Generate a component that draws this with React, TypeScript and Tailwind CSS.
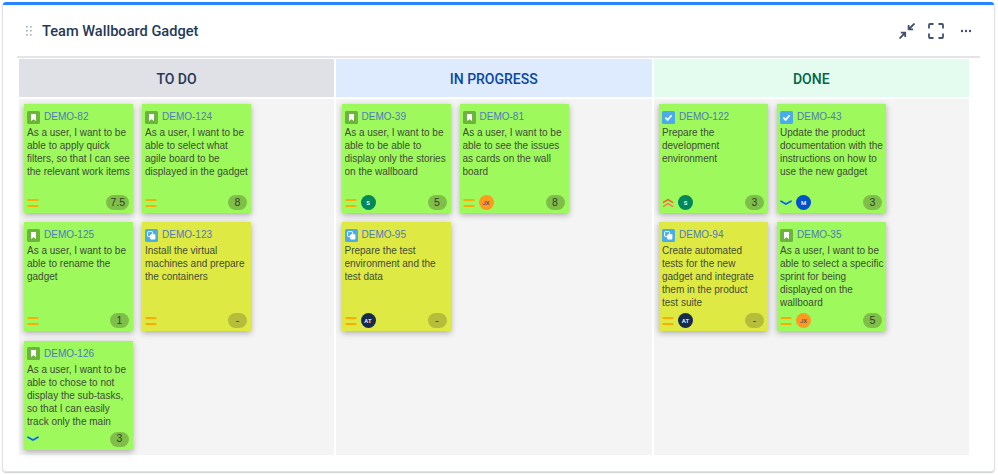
import React from "react";

type Kind = "story" | "task" | "sub";
type Pri = "med" | "low" | "high";
type Av = { t: string; c: string; fg?: string } | null;
type CardT = { id: string; kind: Kind; text: string; pri: Pri; av?: Av; pts: string; yellow?: boolean };

const S: Av = { t: "S", c: "bg-[#00875a]" };
const JX: Av = { t: "JX", c: "bg-[#ff991f]", fg: "text-[#42526e]" };
const AT: Av = { t: "AT", c: "bg-[#172b4d]" };
const M: Av = { t: "M", c: "bg-[#0052cc]" };

const cols: { name: string; head: string; fg: string; pad: string; w: string; cards: CardT[] }[] = [
  {
    name: "TO DO",
    head: "bg-[#dfe1e6]",
    fg: "text-[#253858]",
    pad: "pl-[5px]",
    w: "w-[315px]",
    cards: [
      { id: "DEMO-82", kind: "story", text: "As a user, I want to be able to apply quick filters, so that I can see the relevant work items", pri: "med", pts: "7.5" },
      { id: "DEMO-124", kind: "story", text: "As a user, I want to be able to select what agile board to be displayed in the gadget", pri: "med", pts: "8" },
      { id: "DEMO-125", kind: "story", text: "As a user, I want to be able to rename the gadget", pri: "med", pts: "1" },
      { id: "DEMO-123", kind: "sub", text: "Install the virtual machines and prepare the containers", pri: "med", pts: "-", yellow: true },
      { id: "DEMO-126", kind: "story", text: "As a user, I want to be able to chose to not display the sub-tasks, so that I can easily track only the main", pri: "low", pts: "3" },
    ],
  },
  {
    name: "IN PROGRESS",
    head: "bg-[#deebff]",
    fg: "text-[#0747a6]",
    pad: "pl-[5.5px]",
    w: "w-[315.5px]",
    cards: [
      { id: "DEMO-39", kind: "story", text: "As a user, I want to be able to be able to display only the stories on the wallboard", pri: "med", av: S, pts: "5" },
      { id: "DEMO-81", kind: "story", text: "As a user, I want to be able to see the issues as cards on the wall board", pri: "med", av: JX, pts: "8" },
      { id: "DEMO-95", kind: "sub", text: "Prepare the test environment and the test data", pri: "med", av: AT, pts: "-", yellow: true },
    ],
  },
  {
    name: "DONE",
    head: "bg-[#e3fcef]",
    fg: "text-[#006644]",
    pad: "pl-[5.5px]",
    w: "w-[315.5px]",
    cards: [
      { id: "DEMO-122", kind: "task", text: "Prepare the development environment", pri: "high", av: S, pts: "3" },
      { id: "DEMO-43", kind: "task", text: "Update the product documentation with the instructions on how to use the new gadget", pri: "low", av: M, pts: "3" },
      { id: "DEMO-94", kind: "sub", text: "Create automated\ntests for the new gadget and integrate them in the product test suite", pri: "med", av: AT, pts: "-", yellow: true },
      { id: "DEMO-35", kind: "story", text: "As a user, I want to be able to select a specific sprint for being displayed on the wallboard", pri: "med", av: JX, pts: "5" },
    ],
  },
];

function TypeIcon({ kind }: { kind: Kind }) {
  if (kind === "story")
    return (
      <svg width="13" height="13" viewBox="0 0 13 13" className="shrink-0">
        <rect width="13" height="13" rx="1.5" fill="#6cb33f" />
        <path d="M4 3h5v7L6.5 8.2 4 10z" fill="#fff" />
      </svg>
    );
  if (kind === "task")
    return (
      <svg width="13" height="13" viewBox="0 0 13 13" className="shrink-0">
        <rect width="13" height="13" rx="1.5" fill="#4bade8" />
        <path d="M3.4 6.7l2.2 2.2 4-4.6" stroke="#fff" strokeWidth="1.7" fill="none" />
      </svg>
    );
  return (
    <svg width="13" height="13" viewBox="0 0 13 13" className="shrink-0">
      <rect width="13" height="13" rx="1.5" fill="#4bade8" />
      <rect x="2.6" y="2.6" width="5" height="5" rx="0.8" fill="none" stroke="#fff" strokeWidth="1" />
      <rect x="5.2" y="5.2" width="5.2" height="5.2" rx="0.8" fill="#fff" />
    </svg>
  );
}

function PriIcon({ pri }: { pri: Pri }) {
  if (pri === "med")
    return (
      <svg width="12" height="10" viewBox="0 0 12 10" className="shrink-0">
        <path d="M0.6 2h10.8M0.6 8h10.8" stroke="#ffab00" strokeWidth="2" />
      </svg>
    );
  if (pri === "low")
    return (
      <svg width="12" height="10" viewBox="0 0 12 10" className="shrink-0">
        <path d="M1 3.2l5 2.8 5-2.8" stroke="#0065ff" strokeWidth="1.7" fill="none" strokeLinecap="round" />
      </svg>
    );
  return (
    <svg width="12" height="10" viewBox="0 0 12 10" className="shrink-0">
      <path d="M1 4.6l5-3 5 3" stroke="#ff5630" strokeWidth="1.5" fill="none" />
      <path d="M1 8.6l5-3 5 3" stroke="#ff7452" strokeWidth="1.5" fill="none" />
    </svg>
  );
}

function Card({ c }: { c: CardT }) {
  return (
    <div
      className={`flex h-[109px] w-[109px] flex-col pl-[3px] pr-[2px] pt-[6px] pb-[3px] shadow-[0_2px_6px_rgba(0,0,0,0.3)] ${
        c.yellow ? "bg-[#dfe944]" : "bg-[#9df95c]"
      }`}
    >
      <div className="flex h-[14px] items-center gap-[4px]">
        <TypeIcon kind={c.kind} />
        <span className="font-['Liberation_Sans',sans-serif] text-[10px] leading-[14px] text-[#4f79bd]">{c.id}</span>
      </div>
      <p className="mt-[2px] h-[65px] overflow-hidden whitespace-pre-line font-['Liberation_Sans',sans-serif] text-[10px] leading-[13px] text-[#3f4d37]">{c.text}</p>
      <div className="mt-auto flex h-[15px] items-center pr-[2px]">
        <PriIcon pri={c.pri} />
        {c.av && (
          <span
            className={`ml-[4px] flex h-[15px] w-[15px] items-center justify-center rounded-full text-[6px] font-medium ${c.av.c} ${c.av.fg ?? "text-white"}`}
          >
            {c.av.t}
          </span>
        )}
        <span
          className={`ml-auto flex h-[15px] min-w-[19px] items-center justify-center rounded-full px-[4px] font-['Liberation_Sans',sans-serif] text-[10.5px] text-[#2f3e2a] ${
            c.yellow ? "bg-[#b5bd3a]" : "bg-[#7fbf49]"
          }`}
        >
          {c.pts}
        </span>
      </div>
    </div>
  );
}

export default function App() {
  return (
    <div className="h-[475px] w-[998px] bg-white p-[2px] pr-[3px] font-['Roboto','Liberation_Sans',sans-serif]">
      <div className="flex h-[470px] flex-col rounded-[4px] border border-t-0 border-[#dfe1e6] shadow-[0_1px_1px_rgba(9,30,66,0.2)]">
        <div className="h-[3px] shrink-0 rounded-t-[3px] bg-[#2684ff]" />
        <div className="flex h-[51px] shrink-0 items-center pl-[22px] pr-[22px]">
          <svg width="8" height="10" viewBox="0 0 8 10" className="mr-[9px]">
            {[0, 4, 8].map((y) => (
              <g key={y} fill="#a5adba">
                <rect x="1" y={y} width="1.6" height="1.6" />
                <rect x="5" y={y} width="1.6" height="1.6" />
              </g>
            ))}
          </svg>
          <h1 className="pt-[2px] text-[14.6px] font-medium leading-none text-[#253858]">Team Wallboard Gadget</h1>
          <div className="ml-auto flex items-center">
            <svg width="16" height="16" viewBox="0 0 16 16" fill="none" stroke="#42526e" strokeWidth="1.8">
              <path d="M15.5 0.5l-5.5 5.5M9.6 2v4.4h4.4" />
              <path d="M0.5 15.5l5.5-5.5M1.8 9.6h4.4v4.4" />
            </svg>
            <svg width="16" height="16" viewBox="0 0 16 16" fill="none" stroke="#42526e" strokeWidth="1.8" className="ml-[13px]">
              <path d="M1 5.5V2a1 1 0 0 1 1-1h3.5M10.5 1H14a1 1 0 0 1 1 1v3.5M15 10.5V14a1 1 0 0 1-1 1h-3.5M5.5 15H2a1 1 0 0 1-1-1v-3.5" />
            </svg>
            <svg width="12" height="4" viewBox="0 0 12 4" fill="#42526e" className="ml-[16px]">
              <circle cx="2" cy="2" r="1.2" />
              <circle cx="6" cy="2" r="1.2" />
              <circle cx="10" cy="2" r="1.2" />
            </svg>
          </div>
        </div>
        <div className="mr-[14px] ml-[14px] border-t-2 border-[#e4e5e8] pt-[1px] pl-[2px]">
          <div className="flex gap-[2px]">
            {cols.map((col) => (
              <div key={col.name} className={col.w}>
                <div className={`flex h-[38px] items-center justify-center pt-[2px] text-[14px] font-medium ${col.head} ${col.fg}`}>{col.name}</div>
                <div className={`mt-[2px] flex h-[356px] flex-wrap content-start gap-x-[9px] gap-y-[9.35px] bg-[#f4f4f4] py-[5px] pr-[5px] ${col.pad}`}>
                  {col.cards.map((c) => (
                    <Card key={c.id} c={c} />
                  ))}
                </div>
              </div>
            ))}
          </div>
        </div>
      </div>
    </div>
  );
}
